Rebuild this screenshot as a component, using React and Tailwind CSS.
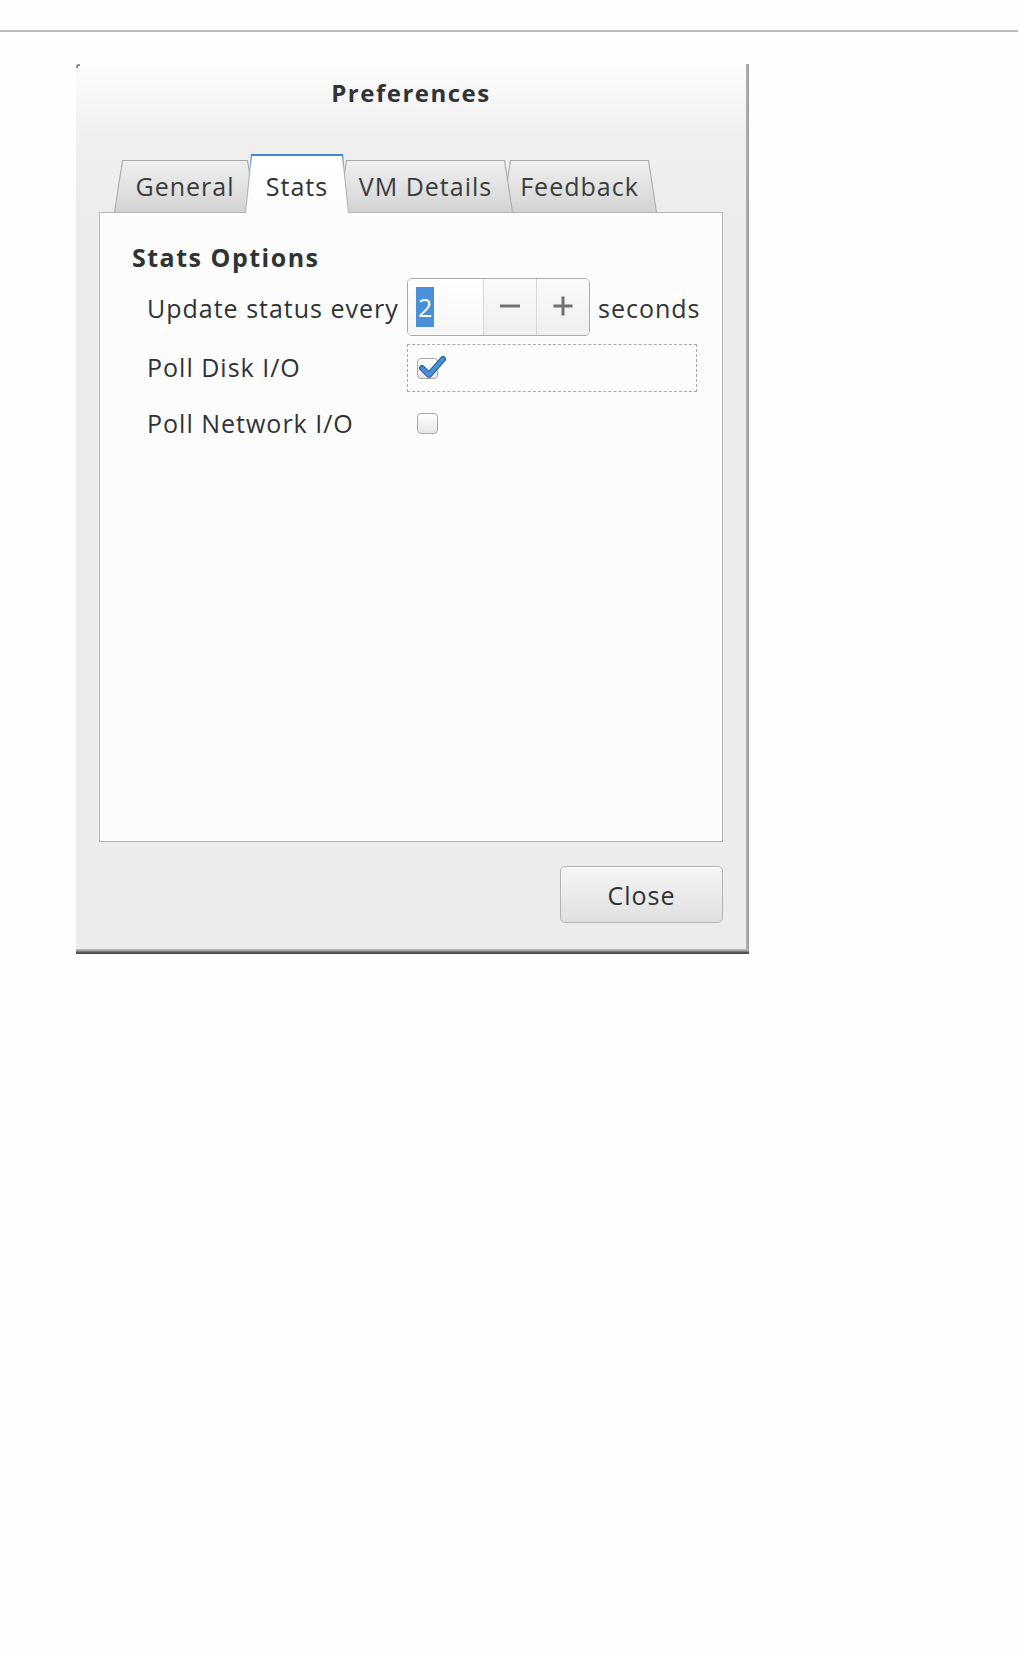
import React from "react";

const FONT = "font-['Open_Sans','Noto_Sans','DejaVu_Sans',sans-serif]";

function Tab({ label, active, className }) {
  if (active) {
    return (
      <div
        className={`relative z-30 -mb-px h-[59px] pt-[2px] px-px bg-[linear-gradient(to_bottom,#3d85d6_0px,#4a90d9_3px,#9db5d2_14px,#b2b2b2_40%,#b2b2b2_100%)] [clip-path:polygon(6px_0,calc(100%_-_6px)_0,100%_100%,0_100%)] ${className}`}
      >
        <div className="h-full pt-[4px] flex items-center justify-center bg-[linear-gradient(to_bottom,#ffffff,#fcfcfc)] [clip-path:polygon(6px_0,calc(100%_-_6px)_0,100%_100%,0_100%)] text-[#2e3436]">
          {label}
        </div>
      </div>
    );
  }
  return (
    <div
      className={`relative h-[52px] pt-px px-px bg-[#a9a9a9] [clip-path:polygon(8px_0,calc(100%_-_8px)_0,100%_100%,0_100%)] ${className}`}
    >
      <div className="h-full flex items-center justify-center bg-[linear-gradient(to_bottom,#efefef,#e2e2e2_50%,#d3d3d3)] [clip-path:polygon(8px_0,calc(100%_-_8px)_0,100%_100%,0_100%)] text-[#3a3d3e]">
        {label}
      </div>
    </div>
  );
}

function CheckBox({ checked }) {
  return (
    <div className="relative w-[21px] h-[21px] rounded-[4px] border border-[#a8a8a8] bg-[linear-gradient(to_bottom,#ffffff,#e6e6e6)] shadow-[inset_0_1px_0_#ffffff]">
      {checked && (
        <svg
          className="absolute left-[1px] top-[-3px]"
          width="28"
          height="24"
          viewBox="0 0 28 24"
        >
          <path
            d="M3 12 L10 19 L24 3"
            fill="none"
            stroke="#2b62a3"
            strokeWidth="6"
            strokeLinecap="round"
            strokeLinejoin="round"
          />
          <path
            d="M3 12 L10 19 L24 3"
            fill="none"
            stroke="#4a90d9"
            strokeWidth="3.5"
            strokeLinecap="round"
            strokeLinejoin="round"
          />
        </svg>
      )}
    </div>
  );
}

export default function App() {
  return (
    <div className={`w-[1020px] h-[1656px] bg-[#fefefe] ${FONT} text-[25px] tracking-[1px] text-[#2e3436] overflow-hidden`}>
      <div className="pt-[30px]">
        <div className="h-[2px] w-[1018px] bg-[#bcbcbc]" />
      </div>

      {/* Dialog */}
      <div className="ml-[76px] mt-[32px] w-[673px] h-[890px] flex flex-col">
        <div className="flex flex-1">
          <div className="relative w-[670px] flex flex-col bg-[linear-gradient(to_bottom,#fcfcfc_0px,#f0f0f0_70px,#ececec_150px,#ececec_100%)]">
            <div className="absolute left-0 top-0 w-[4px] h-[4px] border-t-2 border-l-2 border-[#8a8a8a] rounded-tl-[3px]" />
            <div className="pt-[14px] h-[44px] leading-[30px] text-center font-bold text-[24px] tracking-[1.5px] text-[#2e3436]">
              Preferences
            </div>

            {/* tabs */}
            <div className="relative z-10 mt-[46px] h-[58px] flex items-end">
              <Tab label="General" className="ml-[38px] w-[142px] z-10" />
              <Tab label="Stats" active className="ml-[-11px] w-[104px]" />
              <Tab label="VM Details" className="ml-[-11px] w-[175px] z-20" />
              <Tab label="Feedback" className="ml-[-11px] w-[155px] z-10" />
            </div>

            {/* panel */}
            <div className="ml-[23px] w-[624px] h-[630px] border border-[#b4b4b4] bg-[#fcfcfc]">
              <div className="pt-[29px] pl-[32px] leading-[30px] font-bold text-[25px] tracking-[1.5px]">
                Stats Options
              </div>
              <div className="pl-[47px]">
                {/* row 1 */}
                <div className="mt-[6px] flex items-center h-[58px]">
                  <div className="w-[260px] whitespace-nowrap pt-[3px]">Update status every</div>
                  <div className="flex h-[58px] w-[183px] rounded-[5px] border border-[#ababab] overflow-hidden shadow-[0_1px_0_#ffffff]">
                    <div className="w-[75px] bg-[linear-gradient(to_bottom,#ffffff,#f6f6f6)] flex items-center pl-[8px]">
                      <span className="bg-[#4a90d9] text-white px-[2px] h-[40px] leading-[40px] text-[25px] tracking-normal">
                        2
                      </span>
                    </div>
                    <div className="w-[53px] border-l border-[#d8d8d8] bg-[linear-gradient(to_bottom,#fbfbfb,#eeeeee)] flex items-center justify-center">
                      <svg width="20" height="20" viewBox="0 0 20 20" className="mt-[-3px]">
                        <rect x="0" y="8.5" width="20" height="3" fill="#707070" />
                      </svg>
                    </div>
                    <div className="flex-1 border-l border-[#d8d8d8] bg-[linear-gradient(to_bottom,#fbfbfb,#eeeeee)] flex items-center justify-center">
                      <svg width="20" height="20" viewBox="0 0 20 20" className="mt-[-3px]">
                        <rect x="0.5" y="8.5" width="19" height="3" fill="#707070" />
                        <rect x="8.5" y="0.5" width="3" height="19" fill="#707070" />
                      </svg>
                    </div>
                  </div>
                  <div className="ml-[8px] pt-[3px]">seconds</div>
                </div>

                {/* row 2 */}
                <div className="mt-[8px] flex items-center h-[48px]">
                  <div className="w-[260px]">Poll Disk I/O</div>
                  <div className="w-[290px] h-[48px] border border-dashed border-[#a8a8a8] flex items-center pl-[9px]">
                    <CheckBox checked />
                  </div>
                </div>

                {/* row 3 */}
                <div className="mt-[7px] flex items-center h-[48px]">
                  <div className="w-[260px] pt-[2px]">Poll Network I/O</div>
                  <div className="pl-[10px] flex items-center">
                    <CheckBox />
                  </div>
                </div>
              </div>
            </div>

            {/* Close button */}
            <div className="mt-[24px] ml-[484px] w-[163px] h-[57px] pt-[3px] rounded-[5px] border border-[#b3b3b3] bg-[linear-gradient(to_bottom,#f5f5f5,#e0e0e0)] shadow-[inset_0_1px_0_#ffffff] flex items-center justify-center text-[#2e3436]">
              Close
            </div>
          </div>
          <div className="w-[3px] bg-[linear-gradient(to_right,#b5b5b5,#9a9a9a)]" />
        </div>
        <div className="h-[5px] bg-[linear-gradient(to_bottom,#c2c2c2_0px,#9a9a9a_2px,#5a5a5a_3px,#4a4a4a_5px)]" />
      </div>
    </div>
  );
}
